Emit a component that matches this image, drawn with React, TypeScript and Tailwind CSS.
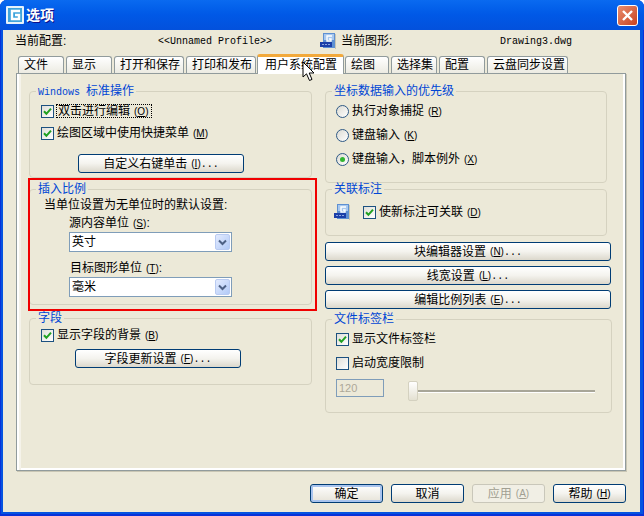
import React from 'react';

const Hot: React.FC<{ k: string; after?: string }> = ({ k, after }) => (
  <span className="ml-[4px] font-['Liberation_Sans',sans-serif] text-[10px]">
    (<span className="underline">{k}</span>)
    {after && <span className="font-['Liberation_Mono',monospace]">{after}</span>}
  </span>
);

const Group: React.FC<{ title: React.ReactNode; className: string; children: React.ReactNode }> = ({ title, className, children }) => (
  <fieldset className={`rounded-[4px] border border-[#D5D2C0] ${className}`}>
    <legend className="ml-[6px] h-[12px] px-[2px] text-[12px] leading-[12px] text-[#0046D5]">{title}</legend>
    {children}
  </fieldset>
);

const Check: React.FC<{ checked?: boolean }> = ({ checked }) => (
  <span className="flex h-[13px] w-[13px] shrink-0 items-center justify-center border border-[#1C5180] bg-gradient-to-br from-[#E0DFD8] to-white">
    {checked && (
      <svg width="9" height="9" viewBox="0 0 9 9">
        <path d="M1 4.2 L3.4 6.8 L8 1.6" fill="none" stroke="#21A121" strokeWidth="2" />
      </svg>
    )}
  </span>
);

const Radio: React.FC<{ on?: boolean }> = ({ on }) => (
  <span className="flex h-[13px] w-[13px] shrink-0 items-center justify-center rounded-full border border-[#2F5A86] bg-gradient-to-br from-[#DCDBD3] to-white">
    {on && <span className="h-[5px] w-[5px] rounded-full bg-[#31B531]" />}
  </span>
);

const Button: React.FC<{ className?: string; disabled?: boolean; primary?: boolean; children: React.ReactNode }> = ({ className, disabled, primary, children }) => {
  const look = disabled
    ? 'border-[#C9C7BA] bg-[#F1EFE5] text-[#A19F92]'
    : primary
      ? 'border-[#003C74] bg-gradient-to-b from-white to-[#E6E3D8] text-black shadow-[inset_0_0_0_2px_#A9C4EE]'
      : 'border-[#003C74] bg-gradient-to-b from-white via-[#F4F3EE] to-[#DCD8CC] text-black';
  return (
    <div className={`flex h-[19px] items-center justify-center rounded-[3px] border text-[12px] ${look} ${className ?? ''}`}>
      {children}
    </div>
  );
};

const Combo: React.FC<{ value: string }> = ({ value }) => (
  <div className="ml-[39px] flex h-[20px] w-[163px] items-center border border-[#7F9DB9] bg-white pl-[2px] pr-[1px] text-[12px]">
    <span className="flex-1">{value}</span>
    <span className="flex h-[16px] w-[15px] items-center justify-center rounded-[2px] border border-[#B9CBF2] bg-gradient-to-br from-[#E3EBFE] to-[#B2CAF7]">
      <svg width="9" height="7" viewBox="0 0 9 7">
        <path d="M1 1.5 L4.5 5 L8 1.5" fill="none" stroke="#4D6185" strokeWidth="2" />
      </svg>
    </span>
  </div>
);

const CadIcon: React.FC = () => (
  <svg width="16" height="16" viewBox="0 0 16 16" className="shrink-0">
    <rect x="3" y="0" width="12" height="15" fill="#5E90D2" />
    <rect x="4" y="1" width="10" height="6" fill="#A8C8EE" />
    <path d="M12 3 H7 V8 H11 V6 H9" fill="none" stroke="#fff" strokeWidth="1.4" />
    <rect x="15" y="1" width="1" height="15" fill="#C9C6B4" />
    <rect x="0" y="9" width="12" height="5" fill="#1B3FA8" />
    <path d="M2 11.5 H10" stroke="#8CA6E0" strokeWidth="1" strokeDasharray="2 1" />
  </svg>
);

const Row: React.FC<{ className?: string; children: React.ReactNode }> = ({ className, children }) => (
  <div className={`flex h-[14px] items-center text-[12px] ${className ?? ''}`}>{children}</div>
);

const tabs = [
  { label: '文件', w: 'w-[46px]' },
  { label: '显示', w: 'w-[46px]' },
  { label: '打开和保存', w: 'w-[70px]' },
  { label: '打印和发布', w: 'w-[70px]' },
  { label: '用户系统配置', w: 'w-[87px]', active: true },
  { label: '绘图', w: 'w-[44px]' },
  { label: '选择集', w: 'w-[46px]' },
  { label: '配置', w: 'w-[46px]' },
  { label: '云盘同步设置', w: 'w-[81px]' },
];

export default function App() {
  return (
    <div className="relative flex h-[516px] w-[644px] flex-col overflow-hidden rounded-t-[7px] bg-[#0553E0] font-['Liberation_Sans','Noto_Sans_CJK_SC',sans-serif] text-black shadow-[inset_1px_0_0_#0831D9,inset_-1px_0_0_#0831D9,inset_0_-2px_0_#0831D9]">
      {/* title bar */}
      <div className="flex h-[30px] shrink-0 items-center bg-gradient-to-b from-[#0A6AF0] via-[#0058E6] to-[#0351DC] pl-[6px] pr-[6px]">
        <svg width="18" height="18" viewBox="0 0 18 18" className="shrink-0">
          <rect x="0" y="0" width="18" height="18" rx="1" fill="#E6F2FB" />
          <rect x="2" y="2" width="14" height="14" fill="#3FA4DC" />
          <path d="M14 5 H6 V13 H13 V9 H9" fill="none" stroke="#fff" strokeWidth="2.4" />
        </svg>
        <span className="ml-[2px] flex-1 text-[14px] font-bold text-white [text-shadow:1px_1px_0_#0F1089]">选项</span>
        <div className="flex h-[21px] w-[21px] items-center justify-center rounded-[3px] border border-white bg-gradient-to-br from-[#E88D6E] to-[#C9401C]">
          <svg width="13" height="13" viewBox="0 0 13 13">
            <path d="M2 2 L11 11 M11 2 L2 11" stroke="#fff" strokeWidth="2.4" />
          </svg>
        </div>
      </div>

      {/* dialog body */}
      <div className="mb-[4px] ml-[3px] mr-[4px] flex-1 bg-[#ECE9D8]">
        <div className="ml-[12px] flex h-[24px] items-center pb-[2px] text-[12px]">
          <span className="w-[143px]">当前配置:</span>
          <span className="w-[162px] font-['Liberation_Mono',monospace] text-[10px]">{'<<Unnamed Profile>>'}</span>
          <CadIcon />
          <span className="ml-[5px] w-[159px]">当前图形:</span>
          <span className="font-['Liberation_Mono',monospace] text-[10px]">Drawing3.dwg</span>
        </div>

        <div className="relative z-10 ml-[15px] flex h-[19px] items-end gap-[2px]">
          {tabs.map(t =>
            t.active ? (
              <div
                key={t.label}
                className={`-mx-[1px] -mb-[1px] h-[20px] ${t.w} rounded-t-[3px] border-x border-t-[3px] border-x-[#919B9C] border-t-[#F2A93B] bg-white pl-[7px] text-[12px] leading-[16px]`}
              >
                {t.label}
              </div>
            ) : (
              <div
                key={t.label}
                className={`h-[17px] ${t.w} rounded-t-[3px] border-x border-t border-[#919B9C] bg-gradient-to-b from-white to-[#ECEBE2] pl-[5px] text-[12px] leading-[17px]`}
              >
                {t.label}
              </div>
            ),
          )}
        </div>

        {/* tab page */}
        <div className="ml-[13px] flex h-[398px] w-[610px] gap-[13px] border border-[#919B9C] bg-[#ECE9D8] pl-[12px] pt-[11px] shadow-[inset_2px_0_0_#fff,inset_4px_0_0_#F5F3EA,inset_-2px_0_0_#fff,inset_0_-2px_0_#fff,1px_1px_0_#C9C6B4]">
          {/* left column */}
          <div className="w-[283px]">
            <Group
              className="h-[93px]"
              title={<><span className="font-['Liberation_Mono',monospace] text-[10px]">Windows</span><span className="ml-[6px]">标准操作</span></>}
            >
              <Row className="ml-[11px] mt-[7px]">
                <Check checked />
                <span className="ml-[2px] flex h-[14px] items-center border border-dotted border-black pl-[1px] pr-[3px]">
                  双击进行编辑<Hot k="O" />
                </span>
              </Row>
              <Row className="ml-[11px] mt-[8px]">
                <Check checked />
                <span className="ml-[3px]">绘图区域中使用快捷菜单<Hot k="M" /></span>
              </Row>
              <Button className="ml-[48px] mt-[14px] w-[166px]">自定义右键单击<Hot k="I" after="..." /></Button>
            </Group>

            <div className="relative mt-[5px]">
              <Group className="h-[122px]" title="插入比例">
                <Row className="ml-[14px] mt-[3px]">当单位设置为无单位时的默认设置:</Row>
                <Row className="ml-[39px] mt-[4px]">源内容单位<Hot k="S" />:</Row>
                <div className="mt-[2px]"><Combo value="英寸" /></div>
                <Row className="ml-[40px] mt-[9px]">目标图形单位<Hot k="T" />:</Row>
                <div className="mt-[2px]"><Combo value="毫米" /></div>
              </Group>
              {/* red annotation over the screenshot */}
              <div className="pointer-events-none absolute -bottom-[6px] -left-[1px] -right-[5px] -top-[5px] border-2 border-[#F00000]" />
            </div>

            <Group className="mt-[7px] h-[73px]" title="字段">
              <Row className="ml-[11px] mt-[4px]">
                <Check checked />
                <span className="ml-[3px]">显示字段的背景<Hot k="B" /></span>
              </Row>
              <Button className="ml-[45px] mt-[7px] w-[166px]">字段更新设置<Hot k="F" after="..." /></Button>
            </Group>
          </div>

          {/* right column */}
          <div className="w-[287px]">
            <Group className="h-[98px] w-[282px]" title="坐标数据输入的优先级">
              <Row className="ml-[10px] mt-[7px]"><Radio /><span className="ml-[3px]">执行对象捕捉<Hot k="R" /></span></Row>
              <Row className="ml-[10px] mt-[10px]"><Radio /><span className="ml-[3px]">键盘输入<Hot k="K" /></span></Row>
              <Row className="ml-[10px] mt-[10px]"><Radio on /><span className="ml-[3px]">键盘输入，脚本例外<Hot k="X" /></span></Row>
            </Group>

            <Group className="h-[53px] w-[282px]" title="关联标注">
              <div className="ml-[8px] mt-[9px] flex h-[16px] items-center text-[12px]">
                <CadIcon />
                <span className="ml-[13px]"><Check checked /></span>
                <span className="ml-[3px]">使新标注可关联<Hot k="D" /></span>
              </div>
            </Group>

            <div className="mt-[6px] flex w-[286px] flex-col gap-[5px]">
              <Button>块编辑器设置<Hot k="N" after="..." /></Button>
              <Button>线宽设置<Hot k="L" after="..." /></Button>
              <Button>编辑比例列表<Hot k="E" after="..." /></Button>
            </div>

            <Group className="mt-[4px] h-[100px] w-[287px]" title="文件标签栏">
              <Row className="ml-[10px] mt-[7px]"><Check checked /><span className="ml-[3px]">显示文件标签栏</span></Row>
              <Row className="ml-[10px] mt-[10px]"><Check /><span className="ml-[3px]">启动宽度限制</span></Row>
              <div className="ml-[10px] mt-[9px] flex items-start">
                <div className="flex h-[18px] w-[48px] items-center border border-[#7F9DB9] pl-[2px] text-[11px] text-[#ACA899]">120</div>
                <div className="ml-[24px] mt-[2px] h-[20px] w-[10px] rounded-[2px] border border-[#D4D1C0] bg-gradient-to-b from-white to-[#E4E1D2]" />
                <div className="mt-[11px] h-[2px] w-[177px] bg-[#A8A698] shadow-[0_1px_0_#fff]" />
              </div>
            </Group>
          </div>
        </div>

        {/* dialog buttons */}
        <div className="ml-[307px] mt-[13px] flex gap-[8px]">
          <Button primary className="w-[73px]">确定</Button>
          <Button className="w-[73px]">取消</Button>
          <Button disabled className="w-[73px]">应用<Hot k="A" /></Button>
          <Button className="w-[73px]">帮助<Hot k="H" /></Button>
        </div>
      </div>

      {/* mouse pointer */}
      <svg width="14" height="21" viewBox="0 0 14 21" className="pointer-events-none absolute left-[302px] top-[61px] z-20">
        <path d="M1 1 V16 L4.5 12.8 L7.5 19.5 L10 18.4 L7.2 12 H12 Z" fill="#fff" stroke="#000" strokeWidth="1" />
      </svg>
    </div>
  );
}
